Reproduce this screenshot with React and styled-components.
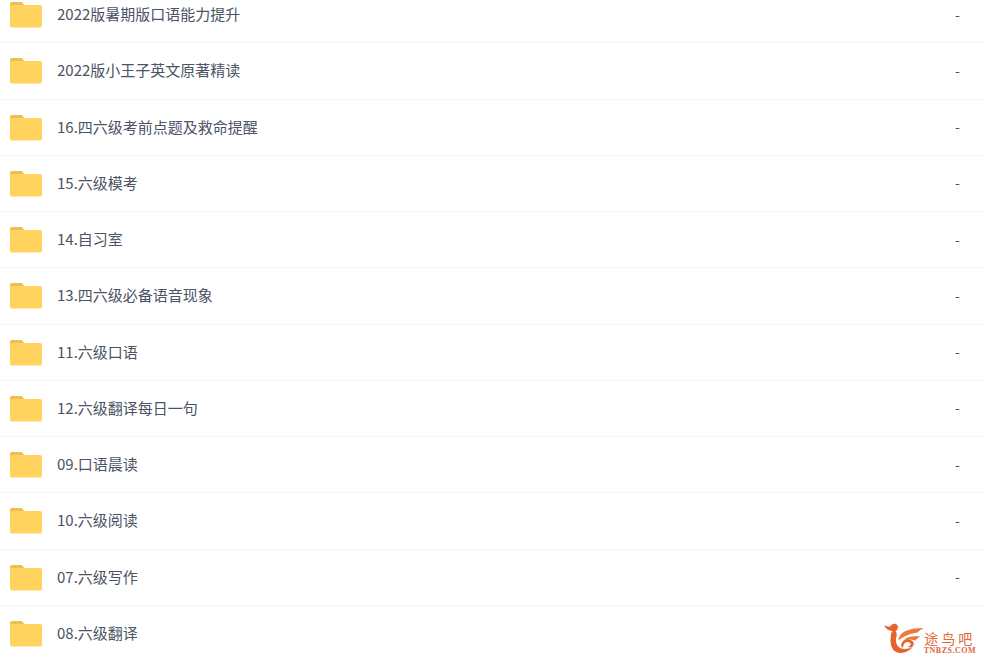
import React from 'react'
import styled, { createGlobalStyle } from 'styled-components'

const GlobalStyle = createGlobalStyle`
  html, body {
    margin: 0;
    padding: 0;
    background: #fff;
    overflow: hidden;
  }
`

const Page = styled.div`
  position: relative;
  width: 986px;
  height: 660px;
  overflow: hidden;
  background: #fff;
  font-family: 'Noto Sans CJK SC', sans-serif;
`

const List = styled.ul`
  list-style: none;
  margin: -13px 0 0;
  padding: 0;
`

const Row = styled.li`
  display: flex;
  align-items: center;
  box-sizing: border-box;
  height: 56.25px;
  padding-left: 10px;
  border-bottom: 1px solid #f6f6f6;
`

const Name = styled.span`
  flex: 1;
  margin-left: 15px;
  padding-bottom: 2px;
  font-size: 15px;
  color: #4b5364;
`

const Size = styled.span`
  width: 31px;
  padding-bottom: 2px;
  font-size: 14px;
  color: #4b5364;
`

const LogoBox = styled.div`
  position: absolute;
  right: 10px;
  bottom: 5px;
  display: flex;
  align-items: flex-end;
`

const LogoText = styled.div`
  display: flex;
  flex-direction: column;
  align-items: center;
`

const LogoName = styled.span`
  font-size: 14px;
  line-height: 18px;
  letter-spacing: 3px;
  color: #e0683a;
  white-space: nowrap;
`

const LogoSite = styled.span`
  font-family: 'Liberation Serif', serif;
  font-size: 8px;
  font-weight: bold;
  line-height: 8px;
  letter-spacing: 0.5px;
  color: #d9663a;
  white-space: nowrap;
`

const FolderIcon = () => (
  <svg width="32" height="27" viewBox="0 0 32 27" style={{ flexShrink: 0 }}>
    <path d="M0 3a2 2 0 0 1 2-2h9a2 2 0 0 1 1.6.8L15 5H2a2 2 0 0 0-2 1z" fill="#f0bd4f" />
    <rect x="0" y="4" width="32" height="22.5" rx="2" fill="#ffd35e" />
  </svg>
)

const LogoMark = () => (
  <svg width="40" height="32" viewBox="0 0 42 33" style={{ flexShrink: 0 }}>
    {/* bird head and the long curve under it */}
    <path d="M0 2c3 1 5 2 7 1 1-2 4-3 6-2 2 1 2 3 1 5 0 1-1 2-2 2 1 1 2 3 1 6-1 5 0 10 4 12 4 2 9 1 13-1-3 4-9 7-15 6C9 30 6 23 7 15 7 11 8 9 9 8 5 8 2 6 0 2z" fill="#e5632d" />
    {/* upper wing */}
    <path d="M15 18c1-8 9-13 27-13-3 1-5 3-7 5-4 0-12 2-20 8z" fill="#ec7a3c" />
    {/* lower wing */}
    <path d="M21 17c4-3 10-4 17-3-2 1-4 3-5 4-3-1-8-1-12-1z" fill="#ec7a3c" />
    {/* spiral */}
    <path d="M18 24c0-5 4-8 9-7 3 1 5 3 4 6-1 2-4 3-6 2 1-1 3-1 3-3 0-2-3-3-5-2-2 1-3 3-3 6z" fill="#e5632d" />
  </svg>
)

const rows = [
  '2022版暑期版口语能力提升',
  '2022版小王子英文原著精读',
  '16.四六级考前点题及救命提醒',
  '15.六级模考',
  '14.自习室',
  '13.四六级必备语音现象',
  '11.六级口语',
  '12.六级翻译每日一句',
  '09.口语晨读',
  '10.六级阅读',
  '07.六级写作',
  '08.六级翻译',
]

const App = () => (
  <Page>
    <GlobalStyle />
    <List>
      {rows.map((name, i) => (
        <Row key={name}>
          <FolderIcon />
          <Name>{name}</Name>
          {/* the watermark hides the last row's dash */}
          <Size>{i < rows.length - 1 ? '-' : ''}</Size>
        </Row>
      ))}
    </List>
    <LogoBox>
      <LogoMark />
      <LogoText>
        <LogoName>途鸟吧</LogoName>
        <LogoSite>TNBZS.COM</LogoSite>
      </LogoText>
    </LogoBox>
  </Page>
)

export default App
